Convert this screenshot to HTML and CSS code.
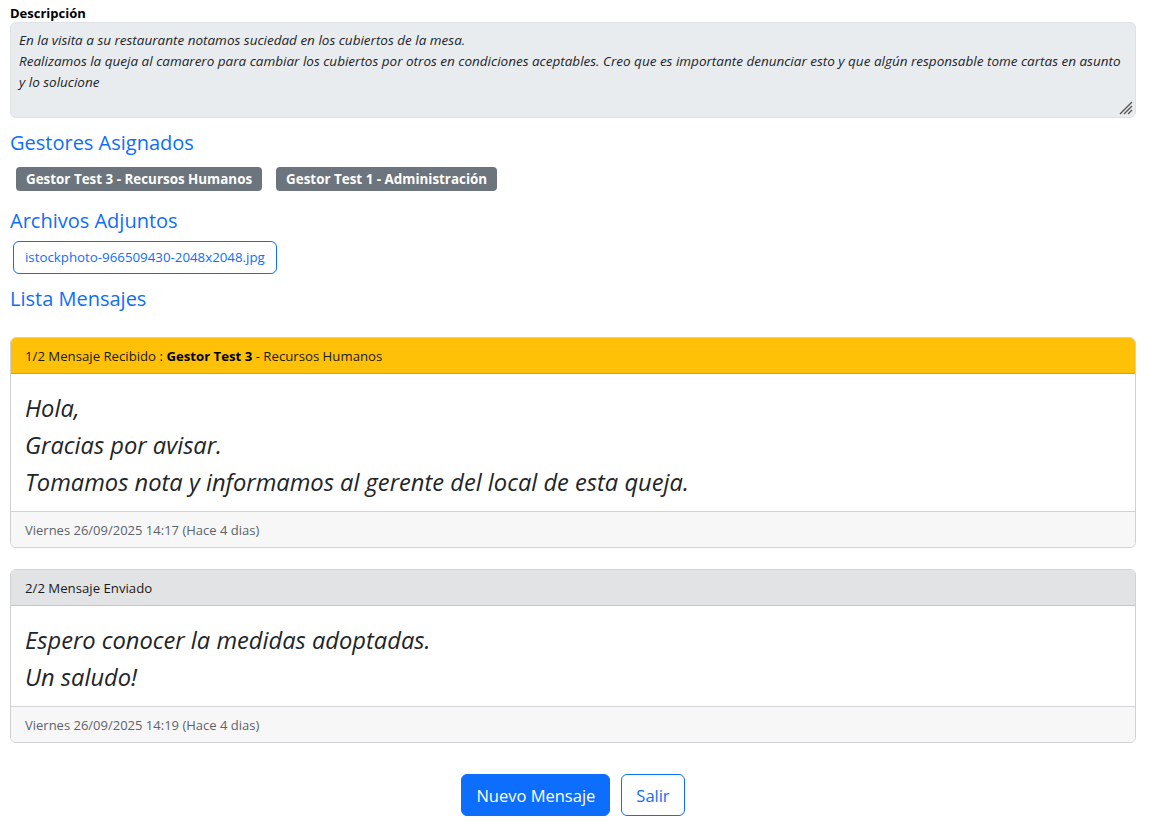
FILE: index.html
```html
<!DOCTYPE html>
<html lang="es">
<head>
<meta charset="utf-8">
<title>Detalle</title>
<link rel="stylesheet" href="styles.css">
</head>
<body>
<div class="page">
  <label class="field-label">Descripción</label>
  <div class="desc-box">
    <p>En la visita a su restaurante notamos suciedad en los cubiertos de la mesa.</p>
    <p>Realizamos la queja al camarero para cambiar los cubiertos por otros en condiciones aceptables. Creo que es importante denunciar esto y que algún responsable tome cartas en asunto y lo solucione</p>
    <svg class="grip" width="16" height="16" viewBox="0 0 16 16"><path d="M15 3 L3 15 M15 7 L7 15 M15 11 L11 15" stroke="#555" stroke-width="1.4" fill="none"/></svg>
  </div>

  <h3 class="section-title">Gestores Asignados</h3>
  <div class="badges">
    <span class="badge">Gestor Test 3 - Recursos Humanos</span>
    <span class="badge">Gestor Test 1 - Administración</span>
  </div>

  <h3 class="section-title">Archivos Adjuntos</h3>
  <div class="files">
    <a class="file-btn">istockphoto-966509430-2048x2048.jpg</a>
  </div>

  <h3 class="section-title">Lista Mensajes</h3>

  <div class="messages">
    <div class="card">
      <div class="card-header warning">1/2 Mensaje Recibido : <b>Gestor Test 3</b> - Recursos Humanos</div>
      <div class="card-body">
        <p>Hola,</p>
        <p>Gracias por avisar.</p>
        <p>Tomamos nota y informamos al gerente del local de esta queja.</p>
      </div>
      <div class="card-footer">Viernes 26/09/2025 14:17 (Hace 4 dias)</div>
    </div>

    <div class="card">
      <div class="card-header secondary">2/2 Mensaje Enviado</div>
      <div class="card-body">
        <p>Espero conocer la medidas adoptadas.</p>
        <p>Un saludo!</p>
      </div>
      <div class="card-footer">Viernes 26/09/2025 14:19 (Hace 4 dias)</div>
    </div>
  </div>

  <div class="actions">
    <button class="btn primary">Nuevo Mensaje</button>
    <button class="btn outline">Salir</button>
  </div>
</div>
</body>
</html>
```
FILE: styles.css
```css
* { box-sizing: border-box; }
html, body { margin: 0; padding: 0; background: #fff; }
body {
  font-family: "Open Sans", "Noto Sans", sans-serif;
  color: #212529;
}
.page {
  padding: 4px 14px 0 10px;
  display: flex;
  flex-direction: column;
}
.field-label {
  font-size: 13px;
  font-weight: 700;
  line-height: 18px;
  color: #000;
}
.desc-box {
  position: relative;
  background: #e9ecef;
  border: 1px solid #dee2e6;
  border-radius: 6px;
  padding: 7px 8px 8px;
  height: 96px;
  font-size: 13.5px;
  font-style: italic;
  line-height: 21px;
}
.desc-box p { margin: 0; }
.grip { position: absolute; right: 2px; bottom: 2px; }
.section-title {
  margin: 10px 0 0;
  font-size: 20px;
  font-weight: 400;
  color: #0d6efd;
  line-height: 30px;
}
.badges {
  display: flex;
  gap: 14px;
  padding: 9px 0 5px 6px;
}
.badge {
  background: #6c757d;
  color: #fff;
  font-weight: 700;
  font-size: 13.4px;
  line-height: 16px;
  padding: 4px 10px;
  border-radius: 4px;
}
.files { padding: 5px 0 0 3px; display: flex; }
.file-btn {
  border: 1px solid #0d6efd;
  color: #0d6efd;
  border-radius: 6px;
  font-size: 13.3px;
  line-height: 19px;
  padding: 6px 11px 6px 11px;
  height: 33px;
}
.messages {
  margin-top: 23px;
  display: flex;
  flex-direction: column;
  gap: 21px;
}
.card {
  border: 1px solid #cfd1d4;
  border-radius: 6px;
  overflow: hidden;
}
.card-header {
  height: 36px;
  padding: 0 14px;
  display: flex;
  align-items: center;
  white-space: pre;
  font-size: 13.2px;
  border-bottom: 1px solid rgba(0,0,0,0.175);
}
.card-header b { font-weight: 700; color: #000; }
.card-header.warning { background: #ffc107; color: #1a1a1a; border-bottom-color: #d9a406; }
.card-header.secondary { background: #e2e3e5; color: #1a1a1a; border-bottom-color: #c4c5c7; }
.card-body {
  padding: 16px 14px 10px;
  font-size: 23.7px;
  font-style: italic;
  line-height: 37px;
  color: #212529;
}
.card-body p { margin: 0; }
.card-footer {
  background: #f7f7f7;
  border-top: 1px solid #d2d4d7;
  height: 36px;
  padding: 0 14px;
  display: flex;
  align-items: center;
  font-size: 13px;
  color: #5c636a;
}
.actions {
  display: flex;
  justify-content: center;
  gap: 11px;
  margin-top: 31px;
  padding-left: 0;
}
.btn {
  font-family: inherit;
  font-size: 16.5px;
  height: 42px;
  padding: 0 14px;
  border-radius: 6px;
  border: 1px solid #0d6efd;
  cursor: pointer;
}
.btn.primary { background: #0d6efd; color: #fff; }
.btn.outline { background: #fff; color: #0d6efd; }
```
